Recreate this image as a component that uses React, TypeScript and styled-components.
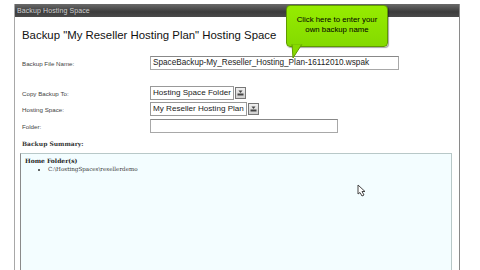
import React from "react";
import styled, { createGlobalStyle } from "styled-components";

const Global = createGlobalStyle`
  html, body { margin: 0; padding: 0; background: #fff; }
  body { width: 480px; height: 270px; overflow: hidden; font-family: "Liberation Sans", Arial, sans-serif; }
`;

const Page = styled.div`
  position: relative;
  width: 480px;
  height: 270px;
  padding: 4px 20px 0 14px;
  box-sizing: border-box;
  background: #fff;
`;

const Panel = styled.div`
  height: 266px;
  border-left: 1px solid #a8a8a8;
  border-right: 1px solid #8a8a8a;
  box-sizing: border-box;
  display: flex;
  flex-direction: column;
`;

const HeaderBar = styled.div`
  height: 13px;
  background: linear-gradient(#6a6a6a, #3c3c3c 60%, #4a4a4a);
  color: #d0d0d0;
  font-size: 7px;
  line-height: 13px;
  padding-left: 2px;
  letter-spacing: 0.1px;
`;

const Body = styled.div`
  flex: 1;
  display: flex;
  flex-direction: column;
  padding: 0 7px 0 5px;
`;

const Title = styled.h1`
  margin: 12px 0 0 2px;
  font-size: 11.4px;
  line-height: 12px;
  font-weight: normal;
  color: #111;
`;

const Row = styled.div<{ $top: number }>`
  display: grid;
  grid-template-columns: 128px auto;
  align-items: center;
  margin-top: ${(p) => p.$top}px;
  padding-left: 2px;
`;

const Label = styled.label`
  font-size: 6.2px;
  color: #444;
`;

const TextBox = styled.div<{ $w: number }>`
  width: ${(p) => p.$w}px;
  height: 14px;
  box-sizing: border-box;
  border: 1px solid #a8a8a8;
  border-top-color: #888;
  background: #fff;
  font-size: 8.2px;
  line-height: 12px;
  padding-left: 2px;
  color: #222;
  white-space: nowrap;
  overflow: hidden;
`;

const SelectWrap = styled.div`
  display: flex;
  align-items: center;
  gap: 1px;
`;

const SelectBox = styled.div`
  height: 14px;
  box-sizing: border-box;
  border: 1px solid #999;
  background: #fff;
  font-size: 8.1px;
  line-height: 12px;
  padding: 0 2px;
  color: #222;
  white-space: nowrap;
`;

const DropButton = styled.div`
  width: 11px;
  height: 12px;
  box-sizing: border-box;
  border: 1px solid #777;
  background: linear-gradient(#f0f0f0, #cfcfcf);
  display: flex;
  align-items: center;
  justify-content: center;
`;

const SectionLabel = styled.div`
  margin: 6px 0 0 2px;
  font-family: "DejaVu Serif", "Liberation Serif", serif;
  font-weight: bold;
  font-size: 6px;
  line-height: 9px;
  color: #333;
`;

const SummaryBox = styled.div`
  margin-top: 5px;
  flex: 1;
  background: #f3fdff;
  border: 1px solid #b8c8c8;
  border-left: 1px solid #8a8a8a;
  border-bottom: none;
  padding: 3px 4px;
  font-family: "DejaVu Serif", "Liberation Serif", serif;
`;

const SummaryHead = styled.div`
  font-weight: bold;
  font-size: 6px;
  line-height: 8px;
  color: #222;
`;

const SummaryList = styled.ul`
  margin: 0;
  padding-left: 23px;
  font-size: 5.6px;
  line-height: 8px;
  color: #333;
  list-style: disc;
`;

const Tooltip = styled.div`
  position: absolute;
  left: 286px;
  top: 5px;
  width: 102px;
  height: 42px;
  box-sizing: border-box;
  border-radius: 4px;
  background: linear-gradient(#96ec00, #84da00);
  border: 1px solid #5f9a00;
  box-shadow: 1px 1px 1px rgba(0, 0, 0, 0.35);
  display: flex;
  align-items: center;
  justify-content: center;
  text-align: center;
  font-size: 7.8px;
  line-height: 10px;
  color: #000;
  padding-bottom: 2px;
`;

const TooltipTail = styled.svg`
  position: absolute;
  left: 290px;
  top: 44px;
`;

const Cursor = styled.svg`
  position: absolute;
  left: 357px;
  top: 184px;
`;

const Arrow = () => (
  <svg width="7" height="6" viewBox="0 0 7 6">
    <rect x="0.5" y="3.5" width="6" height="2" fill="#444" />
    <path d="M1.5 0.5 L5.5 0.5 L3.5 3 Z" fill="#444" />
  </svg>
);

export default function App() {
  return (
    <>
      <Global />
      <Page>
        <Panel>
          <HeaderBar>Backup Hosting Space</HeaderBar>
          <Body>
            <Title>Backup "My Reseller Hosting Plan" Hosting Space</Title>
            <Row $top={15}>
              <Label>Backup File Name:</Label>
              <TextBox $w={249}>SpaceBackup-My_Reseller_Hosting_Plan-16112010.wspak</TextBox>
            </Row>
            <Row $top={16}>
              <Label>Copy Backup To:</Label>
              <SelectWrap>
                <SelectBox>Hosting Space Folder</SelectBox>
                <DropButton><Arrow /></DropButton>
              </SelectWrap>
            </Row>
            <Row $top={2}>
              <Label>Hosting Space:</Label>
              <SelectWrap>
                <SelectBox>My Reseller Hosting Plan</SelectBox>
                <DropButton><Arrow /></DropButton>
              </SelectWrap>
            </Row>
            <Row $top={3}>
              <Label>Folder:</Label>
              <TextBox $w={188} />
            </Row>
            <SectionLabel>Backup Summary:</SectionLabel>
            <SummaryBox>
              <SummaryHead>Home Folder(s)</SummaryHead>
              <SummaryList>
                <li>C:\HostingSpaces\resellerdemo</li>
              </SummaryList>
            </SummaryBox>
          </Body>
        </Panel>
        <Tooltip>
          Click here to enter your
          <br />
          own backup name
        </Tooltip>
        <TooltipTail width="16" height="16" viewBox="0 0 16 16">
          <path d="M2 0 L3 14 L12 0 Z" fill="#86da00" stroke="#5f9a00" strokeWidth="1" />
          <path d="M1.5 -0.5 L12.5 -0.5" stroke="#86da00" strokeWidth="2" />
        </TooltipTail>
        <Cursor width="12" height="14" viewBox="0 0 12 14">
          <path d="M1 1 L1 10 L3 8.5 L5 12 L7 11 L5 7.5 L8 7.5 Z" fill="#fff" stroke="#444" strokeWidth="1" />
        </Cursor>
      </Page>
    </>
  );
}
